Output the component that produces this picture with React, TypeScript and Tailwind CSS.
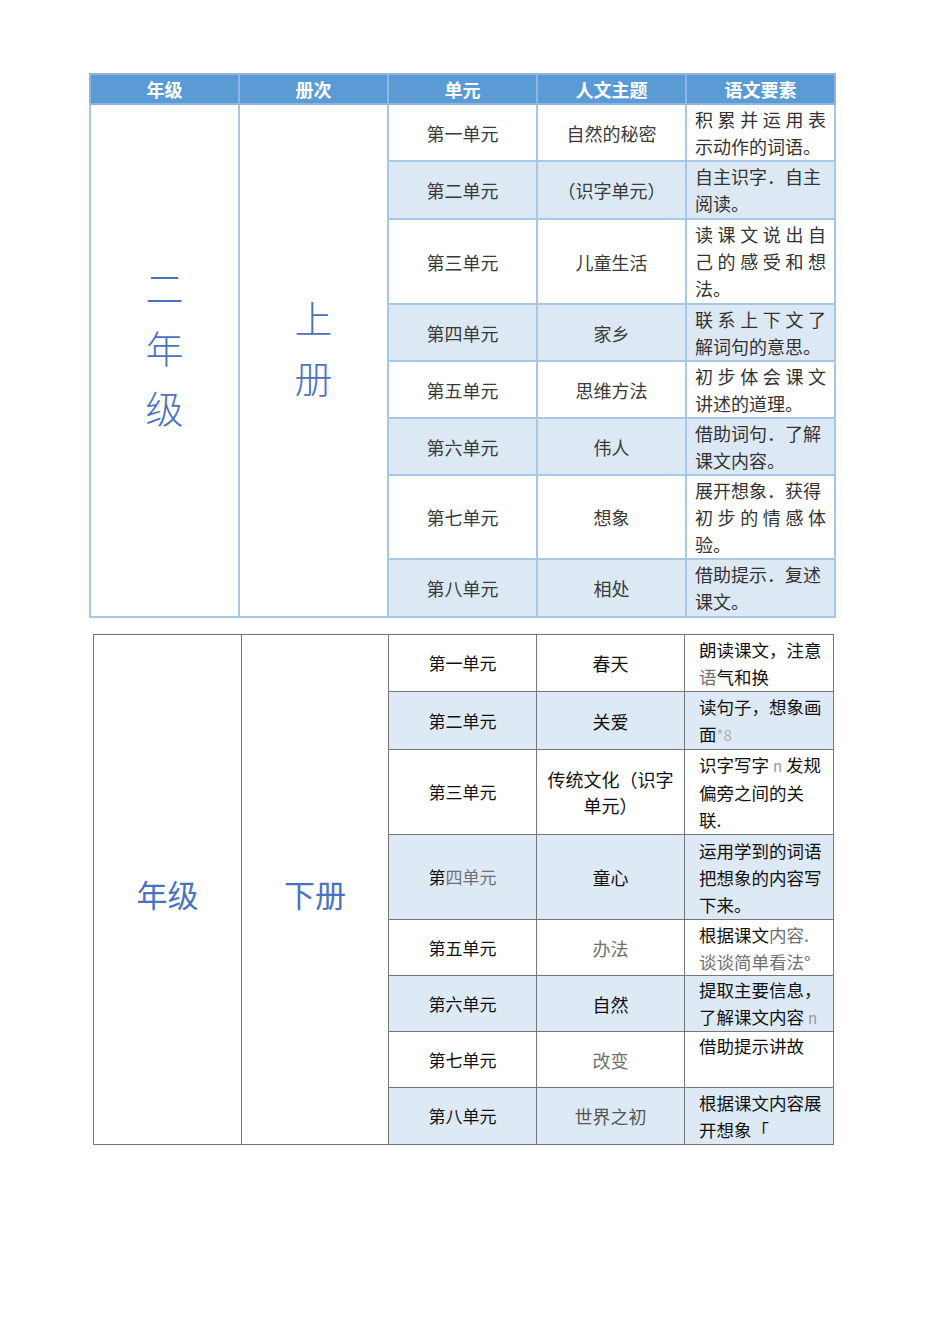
const font = { fontFamily: '"Noto Sans CJK SC", "Noto Sans", sans-serif' };

type Line = { text: string; spread?: boolean };

const upperRows: { unit: string; theme: string; lines: Line[]; h: string }[] = [
  { unit: "第一单元", theme: "自然的秘密", h: "h-[57px]", lines: [{ text: "积累并运用表", spread: true }, { text: "示动作的词语。" }] },
  { unit: "第二单元", theme: "（识字单元）", h: "h-[58px]", lines: [{ text: "自主识字．自主" }, { text: "阅读。" }] },
  { unit: "第三单元", theme: "儿童生活", h: "h-[85px]", lines: [{ text: "读课文说出自", spread: true }, { text: "己的感受和想", spread: true }, { text: "法。" }] },
  { unit: "第四单元", theme: "家乡", h: "h-[57px]", lines: [{ text: "联系上下文了", spread: true }, { text: "解词句的意思。" }] },
  { unit: "第五单元", theme: "思维方法", h: "h-[57px]", lines: [{ text: "初步体会课文", spread: true }, { text: "讲述的道理。" }] },
  { unit: "第六单元", theme: "伟人", h: "h-[57px]", lines: [{ text: "借助词句．了解" }, { text: "课文内容。" }] },
  { unit: "第七单元", theme: "想象", h: "h-[84px]", lines: [{ text: "展开想象．获得" }, { text: "初步的情感体", spread: true }, { text: "验。" }] },
  { unit: "第八单元", theme: "相处", h: "h-[58px]", lines: [{ text: "借助提示．复述" }, { text: "课文。" }] },
];

function UpperTable() {
  const headers = ["年级", "册次", "单元", "人文主题", "语文要素"];
  const cell = "border-2 border-[#a7c7e7]";
  return (
    <table className="table-fixed border-collapse w-[746px] ml-[89px]" style={font}>
      <colgroup>
        {headers.map((h) => (
          <col key={h} className="w-[149px]" />
        ))}
      </colgroup>
      <thead>
        <tr className="h-[30px] bg-[#5b9bd5]">
          {headers.map((h) => (
            <th key={h} className="border-2 border-[#8db6e0] text-white text-[18px] leading-[24px] font-bold text-center">
              {h}
            </th>
          ))}
        </tr>
      </thead>
      <tbody>
        {upperRows.map((r, i) => (
          <tr key={r.unit} className={`${r.h} ${i % 2 === 1 ? "bg-[#dde8f5]" : "bg-white"}`}>
            {i === 0 && (
              <>
                <td rowSpan={8} className={`${cell} bg-white text-center align-middle pb-[28px]`}>
                  <div className="flex flex-col items-center text-[#4a72c0] text-[38px] leading-[60px] font-light">
                    <span>二</span>
                    <span>年</span>
                    <span>级</span>
                  </div>
                </td>
                <td rowSpan={8} className={`${cell} bg-white text-center align-middle pb-[28px]`}>
                  <div className="flex flex-col items-center text-[#4a72c0] text-[38px] leading-[60px] font-light">
                    <span>上</span>
                    <span>册</span>
                  </div>
                </td>
              </>
            )}
            <td className={`${cell} text-center text-[18px] leading-[24px] text-[#3a3a3a]`}>{r.unit}</td>
            <td className={`${cell} text-center text-[18px] leading-[24px] text-[#3a3a3a]`}>{r.theme}</td>
            <td className={`${cell} px-[8px] text-[18px] leading-[27px] text-[#333]`}>
              {r.lines.map((l, k) => (
                <div key={k} className={l.spread ? "text-justify [text-align-last:justify]" : "whitespace-nowrap"}>
                  {l.text}
                </div>
              ))}
            </td>
          </tr>
        ))}
      </tbody>
    </table>
  );
}

const G = ({ children }: { children: React.ReactNode }) => <span className="text-[#707070]">{children}</span>;

const lowerRows: { unit: React.ReactNode; theme: React.ReactNode; goal: React.ReactNode; h: string; top?: boolean }[] = [
  { unit: "第一单元", theme: "春天", h: "h-[57px]", goal: <>朗读课文，注意<br /><G>语</G>气和换</> },
  { unit: "第二单元", theme: "关爱", h: "h-[58px]", goal: <>读句子，想象画<br />面<span className="text-[#b0b0b0] text-[15px]">*8</span></> },
  { unit: "第三单元", theme: <>传统文化（识字<br />单元）</>, h: "h-[85px]", goal: <>识字写字 <span className="text-[#9a9a9a] text-[15px]">n</span> 发规<br />偏旁之间的关<br />联.</> },
  { unit: <>第<G>四单元</G></>, theme: "童心", h: "h-[85px]", goal: <>运用学到的词语<br />把想象的内容写<br />下来。</> },
  { unit: "第五单元", theme: <G>办法</G>, h: "h-[56px]", goal: <><span>根据课文<G>内容.</G></span><br /><G>谈谈简单看法°</G></> },
  { unit: "第六单元", theme: "自然", h: "h-[56px]", goal: <>提取主要信息，<br />了解课文内容 <span className="text-[#9a9a9a] text-[15px]">n</span></> },
  { unit: "第七单元", theme: <G>改变</G>, h: "h-[56px]", top: true, goal: <>借助提示讲故</> },
  { unit: "第八单元", theme: <span className="text-[#555]">世界之初</span>, h: "h-[57px]", goal: <>根据课文内容展<br />开想象「</> },
];

function LowerTable() {
  const cell = "border border-[#767676]";
  return (
    <table className="table-fixed border-collapse w-[740px] ml-[93px] mt-[16px]" style={font}>
      <colgroup>
        <col className="w-[148px]" />
        <col className="w-[147px]" />
        <col className="w-[148px]" />
        <col className="w-[148px]" />
        <col className="w-[149px]" />
      </colgroup>
      <tbody>
        {lowerRows.map((r, i) => (
          <tr key={i} className={`${r.h} ${i % 2 === 1 ? "bg-[#dee9f6]" : "bg-white"}`}>
            {i === 0 && (
              <>
                <td rowSpan={8} className={`${cell} bg-white text-center align-middle text-[#4a72c0] text-[31px] pt-[10px]`}>
                  年级
                </td>
                <td rowSpan={8} className={`${cell} bg-white text-center align-middle text-[#4a72c0] text-[31px] pt-[10px]`}>
                  下册
                </td>
              </>
            )}
            <td className={`${cell} text-center text-[17px] leading-[24px] text-[#111]`}>{r.unit}</td>
            <td className={`${cell} text-center text-[18px] leading-[26px] text-[#111]`}>{r.theme}</td>
            <td className={`${cell} pl-[14px] pr-[2px] text-[17.5px] leading-[27px] text-[#111] whitespace-nowrap ${r.top ? "align-top" : "align-middle"}`}>
              {r.goal}
            </td>
          </tr>
        ))}
      </tbody>
    </table>
  );
}

export default function App() {
  return (
    <div className="w-[950px] h-[1344px] bg-white pt-[73px]">
      <UpperTable />
      <LowerTable />
    </div>
  );
}
